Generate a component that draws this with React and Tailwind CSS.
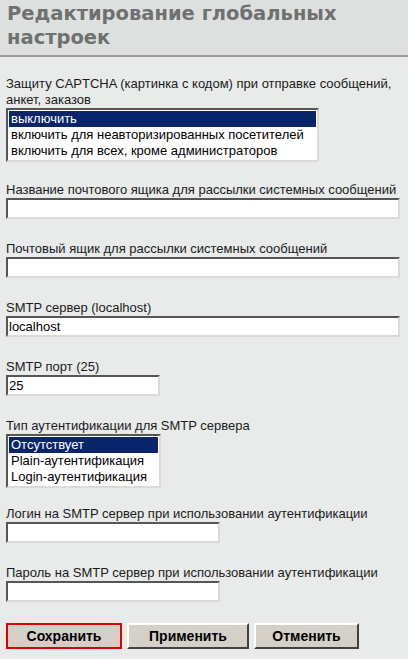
const label = "text-[13px] leading-[16px] text-[#1a1a1a] [font-family:'Liberation_Sans',Arial,sans-serif]";
const inputCls =
  "block h-[21px] bg-white border-2 border-t-[#555] border-l-[#555] border-b-[#dcdad5] border-r-[#dcdad5] px-[1px] text-[13px] text-black outline-none [font-family:'Liberation_Sans',Arial,sans-serif]";

function ListBox({ options, width }) {
  return (
    <div
      className={`${width} h-[54px] bg-white border-2 border-t-[#555] border-l-[#555] border-b-[#dcdad5] border-r-[#dcdad5] p-[1px] text-[13px] leading-[16px] [font-family:'Liberation_Sans',Arial,sans-serif]`}
    >
      {options.map((o, i) => (
        <div
          key={o}
          className={
            i === 0
              ? "bg-[#0a246a] text-white px-[2px] whitespace-nowrap"
              : "text-black px-[2px] whitespace-nowrap"
          }
        >
          {o}
        </div>
      ))}
    </div>
  );
}

function Field({ title, width, value = "" }) {
  return (
    <div className="mb-[22px]">
      <div className={label}>{title}</div>
      <input className={`${inputCls} ${width}`} defaultValue={value} />
    </div>
  );
}

function Btn({ children, w, primary }) {
  return (
    <button
      className={`${w} h-[26px] bg-[#d4d0c8] text-[14px] font-bold text-black [font-family:'Liberation_Sans',Arial,sans-serif] ${
        primary
          ? "border-2 border-[#e00000]"
          : "border-2 border-t-white border-l-white border-b-[#404040] border-r-[#404040]"
      }`}
    >
      {children}
    </button>
  );
}

export default function App() {
  return (
    <div className="w-[408px] min-h-[659px] bg-[#e8ebea]">
      <div className="bg-[#dde0df] border-b-2 border-[#9c9c9c] pl-[7px] pt-[2px] pb-[5px]">
        <h1 className="text-[19.5px] leading-[24px] font-bold text-[#6f7170] [font-family:'DejaVu_Sans',Verdana,sans-serif]">
          Редактирование глобальных настроек
        </h1>
      </div>

      <div className="px-[6px] pt-[19px]">
        <div className="mb-[20px]">
          <div className={label}>
            Защиту CAPTCHA (картинка с кодом) при отправке сообщений, анкет, заказов
          </div>
          <ListBox
            width="w-[313px]"
            options={[
              "выключить",
              "включить для неавторизированных посетителей",
              "включить для всех, кроме администраторов",
            ]}
          />
        </div>

        <Field title="Название почтового ящика для рассылки системных сообщений" width="w-[394px]" />
        <Field title="Почтовый ящик для рассылки системных сообщений" width="w-[394px]" />
        <Field title="SMTP сервер (localhost)" width="w-[394px]" value="localhost" />
        <Field title="SMTP порт (25)" width="w-[154px]" value="25" />

        <div className="mb-[18px]">
          <div className={label}>Тип аутентификации для SMTP сервера</div>
          <ListBox
            width="w-[155px]"
            options={["Отсутствует", "Plain-аутентификация", "Login-аутентификация"]}
          />
        </div>

        <Field title="Логин на SMTP сервер при использовании аутентификации" width="w-[214px]" />
        <div className="mb-[21px]">
          <div className={label}>Пароль на SMTP сервер при использовании аутентификации</div>
          <input type="password" className={`${inputCls} w-[214px]`} />
        </div>

        <div className="flex gap-[5px]">
          <Btn w="w-[116px]" primary>
            Сохранить
          </Btn>
          <Btn w="w-[122px]">Применить</Btn>
          <Btn w="w-[105px]">Отменить</Btn>
        </div>
      </div>
    </div>
  );
}
